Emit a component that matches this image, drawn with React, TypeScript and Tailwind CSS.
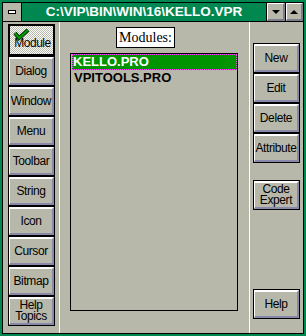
import React from "react";

const face = "bg-[#b8b8aa]";

function PushButton({ label, two = false }: { label: string; two?: boolean }) {
    return (
        <div className={`h-[30px] border border-black ${face}`}>
            <div className="h-full flex items-center justify-center border-t-2 border-l border-b-2 border-r-2 border-t-white border-l-white border-b-[#8888a8] border-r-[#8888a8]">
                <span className={`whitespace-pre-line text-[12px] tracking-[-0.4px] text-black text-center ${two ? "leading-[11px]" : "leading-[13px]"}`}>
                    {label}
                </span>
            </div>
        </div>
    );
}

function CheckedButton({ label }: { label: string }) {
    return (
        <div className="relative h-[32px] border-2 border-black bg-[repeating-conic-gradient(#ffffff_0%_25%,#b8b8aa_0%_50%)] bg-[length:2px_2px]">
            <div className="h-full flex items-center justify-center pt-[6px] pl-[2px]">
                <span className="text-[12px] leading-[13px] tracking-[-0.5px] text-black">{label}</span>
            </div>
            <svg className="absolute left-[3px] top-[2px]" width="17" height="13" viewBox="0 0 17 13">
                <polyline points="2,5 6,10 15,2" fill="none" stroke="#003000" strokeWidth="4" />
                <polyline points="2,5 6,10 15,2" fill="none" stroke="#00a000" strokeWidth="2" />
            </svg>
        </div>
    );
}

function TitleButton({ up }: { up?: boolean }) {
    return (
        <div className={`h-full flex items-center justify-center ${face} border-t border-l border-b-2 border-r-2 border-t-white border-l-white border-b-[#7c7c8c] border-r-[#7c7c8c]`}>
            {up ? (
                <div className="w-0 h-0 border-l-[4px] border-r-[4px] border-b-[4px] border-l-transparent border-r-transparent border-b-black" />
            ) : (
                <div className="w-0 h-0 border-l-[4px] border-r-[4px] border-t-[4px] border-l-transparent border-r-transparent border-t-black" />
            )}
        </div>
    );
}

export default function App() {
    const leftButtons = ["Dialog", "Window", "Menu", "Toolbar", "String", "Icon", "Cursor", "Bitmap"];

    return (
        <div className="w-[306px] h-[336px] bg-[#008850] p-[2px] font-['Liberation_Sans',Arial,sans-serif]">
            <div className="w-full h-full border border-black flex flex-col bg-[#b8b8aa]">
                {/* title bar */}
                <div className="h-[19px] flex border-b border-black shrink-0">
                    <div className={`w-[19px] border-r border-black ${face} flex items-center justify-center`}>
                        <div className="w-[8px] h-[4px] border border-black bg-white" />
                    </div>
                    <div className="flex-1 bg-[#008850] flex items-center justify-center text-white font-bold text-[13.5px] leading-none">
                        C:\VIP\BIN\WIN\16\KELLO.VPR
                    </div>
                    <div className="w-[19px] border-l border-black">
                        <TitleButton />
                    </div>
                    <div className="w-[18px] border-l border-black">
                        <TitleButton up />
                    </div>
                </div>

                {/* client */}
                <div className="flex-1 flex">
                    <div className="w-[57px] border-r border-white pl-[5px] pt-[2px]">
                        <div className="w-[47px] flex flex-col">
                            <CheckedButton label="Module" />
                            {leftButtons.map((b) => (
                                <PushButton key={b} label={b} />
                            ))}
                            <PushButton label={"Help\nTopics"} two />
                        </div>
                    </div>

                    <div className="w-[189px] flex flex-col items-start">
                        <div className="ml-[56px] mt-[5px] w-[59px] h-[21px] border border-black bg-white flex items-center justify-center font-['Liberation_Serif','Times_New_Roman',serif] text-[14px] leading-none text-black">
                            Modules:
                        </div>
                        <div className="ml-[10px] mt-[5px] w-[168px] h-[258px] border border-black font-bold text-[13px] leading-[16px]">
                            <div className="ml-[1px] h-[16px] bg-[#009400] text-white pl-[1px] outline-1 outline-dotted outline-[#ff40ff] -outline-offset-1">
                                KELLO.PRO
                            </div>
                            <div className="h-[16px] pl-[3px] text-black">VPITOOLS.PRO</div>
                        </div>
                    </div>

                    <div className="w-[54px] border-l border-white pl-[3px] pt-[21px] pb-[14px] flex flex-col">
                        <div className="w-[47px] flex flex-col">
                            <PushButton label="New" />
                            <PushButton label="Edit" />
                            <PushButton label="Delete" />
                            <PushButton label="Attribute" />
                            <div className="mt-[17px]">
                                <PushButton label={"Code\nExpert"} two />
                            </div>
                        </div>
                        <div className="w-[47px] mt-auto">
                            <PushButton label="Help" />
                        </div>
                    </div>
                </div>
            </div>
        </div>
    );
}
